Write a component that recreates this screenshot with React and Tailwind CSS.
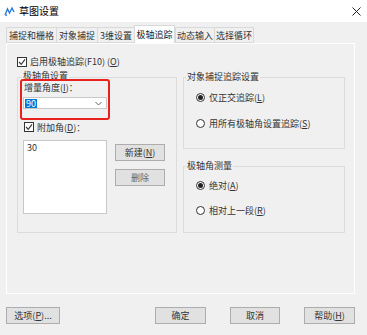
import React from "react";

const FONT = { fontFamily: '"Noto Sans CJK SC", "Noto Sans", sans-serif' };

function CheckBox() {
  return (
    <span className="w-[10px] h-[10px] border border-[#333] bg-white flex items-center justify-center shrink-0">
      <svg width="8" height="8" viewBox="0 0 8 8">
        <path d="M1 4 L3.2 6.3 L7 1.3" fill="none" stroke="#333" strokeWidth="1.1" />
      </svg>
    </span>
  );
}

function Radio({ checked }) {
  return (
    <span className="w-[9px] h-[9px] rounded-full border border-[#333] bg-white flex items-center justify-center shrink-0">
      {checked && <span className="w-[5px] h-[5px] rounded-full bg-[#222]" />}
    </span>
  );
}

function Btn({ children, className = "" }) {
  return (
    <div
      className={
        "h-[17px] bg-[#e1e1e1] border border-[#adadad] flex items-center justify-center text-[9px] text-[#333] " +
        className
      }
    >
      {children}
    </div>
  );
}

function U({ children }) {
  return <span className="underline">{children}</span>;
}

function GroupLabel({ children, className = "" }) {
  return (
    <span className={"self-start px-px bg-[#f0f0f0] text-[9px] leading-[10px] " + className}>
      {children}
    </span>
  );
}

export default function App() {
  const tabs = [
    { label: "捕捉和栅格", w: "w-[51px]" },
    { label: "对象捕捉", w: "w-[42px]" },
    { label: "3维设置", w: "w-[38px]" },
    { label: "极轴追踪", w: "w-[41px]", active: true },
    { label: "动态输入", w: "w-[40px]" },
    { label: "选择循环", w: "w-[40px]" },
  ];

  return (
    <div className="w-[367px] h-[335px] bg-[#f0f0f0] flex flex-col text-[#333] overflow-hidden" style={FONT}>
      {/* title bar */}
      <div className="h-[22px] bg-white flex items-center pl-[4px] pr-[6px]">
        <svg width="11" height="11" viewBox="0 0 11 11">
          <path d="M1 9 L3.5 3 L5.5 7 L8 2 L10 6" fill="none" stroke="#2b7bd6" strokeWidth="1.4" />
          <circle cx="2" cy="9" r="1.2" fill="#5aa2e8" />
        </svg>
        <span className="ml-[4px] text-[10px] text-black leading-none">草图设置</span>
        <svg className="ml-auto" width="9" height="9" viewBox="0 0 9 9">
          <path d="M0.5 0.5 L8.5 8.5 M8.5 0.5 L0.5 8.5" stroke="#222" strokeWidth="1" />
        </svg>
      </div>

      {/* tabs */}
      <div className="mt-[4px] ml-[6px] h-[17px] flex items-end">
        {tabs.map((t) => (
          <div
            key={t.label}
            className={
              t.w +
              " flex items-center justify-center text-[9px] leading-none " +
              (t.active
                ? "h-[18px] bg-white border border-b-0 border-[#d9d9d9] text-[#222]"
                : "h-[16px] bg-[#f0f0f0] border border-[#d9d9d9] -mr-px text-[#333]")
            }
          >
            {t.label}
          </div>
        ))}
      </div>

      {/* panel */}
      <div className="ml-[6px] w-[349px] h-[251px] border border-white bg-[#f0f0f0] pl-[10px] pt-[12px] flex flex-col">
        <div className="flex items-center h-[11px] gap-[3px] text-[9px] leading-none">
          <CheckBox />
          <span>
            启用极轴追踪(F10) (<U>O</U>)
          </span>
        </div>

        <div className="mt-[10px] flex gap-[6px]">
          {/* left group */}
          <div className="relative w-[160px] h-[156px] border border-[#dcdcdc] flex flex-col">
            <GroupLabel className="-mt-[7px] ml-[4px]">极轴角设置</GroupLabel>
            <div className="ml-[6px] mt-[2px] text-[9px] leading-[10px]">
              增量角度(<U>I</U>)：
            </div>
            <div className="ml-[5px] mt-[4px] w-[84px] h-[12px] bg-white border border-[#c8c8c8] flex items-center pl-[1px] pr-[4px]">
              <span className="bg-[#0078d7] text-white text-[9px] leading-[9px] px-px">90</span>
              <svg className="ml-auto" width="7" height="5" viewBox="0 0 7 5">
                <path d="M0.5 1 L3.5 4 L6.5 1" fill="none" stroke="#555" strokeWidth="0.9" />
              </svg>
            </div>
            <div className="ml-[6px] mt-[13px] flex items-center gap-[3px] h-[10px] text-[9px] leading-none">
              <CheckBox />
              <span>
                附加角(<U>D</U>)：
              </span>
            </div>
            <div className="mt-[8px] flex">
              <div className="ml-[5px] w-[84px] h-[74px] bg-white border border-[#c8c8c8] px-[3px] pt-[1px] text-[9px] leading-[11px]">
                30
              </div>
              <div className="ml-[8px] w-[50px] flex flex-col">
                <Btn className="mt-[4px]">
                  新建(<U>N</U>)
                </Btn>
                <Btn className="mt-[8px] text-[#666]">删除</Btn>
              </div>
            </div>

            {/* red annotation */}
            <div className="absolute left-[2px] top-[1px] w-[90px] h-[41px] border-2 border-[#e8211e] rounded-[3px]" />
          </div>

          {/* right column */}
          <div className="flex flex-col">
            <div className="w-[162px] h-[72px] border border-[#dcdcdc] flex flex-col">
              <GroupLabel className="-mt-[6px] ml-[2px]">对象捕捉追踪设置</GroupLabel>
              <div className="ml-[12px] mt-[10px] flex items-center gap-[4px] h-[10px] text-[9px] leading-none">
                <Radio checked />
                <span>
                  仅正交追踪(<U>L</U>)
                </span>
              </div>
              <div className="ml-[12px] mt-[16px] flex items-center gap-[4px] h-[10px] text-[9px] leading-none">
                <Radio />
                <span>
                  用所有极轴角设置追踪(<U>S</U>)
                </span>
              </div>
            </div>

            <div className="mt-[17px] w-[162px] h-[67px] border border-[#dcdcdc] flex flex-col">
              <GroupLabel className="-mt-[6px] ml-[2px]">极轴角测量</GroupLabel>
              <div className="ml-[12px] mt-[9px] flex items-center gap-[4px] h-[10px] text-[9px] leading-none">
                <Radio checked />
                <span>
                  绝对(<U>A</U>)
                </span>
              </div>
              <div className="ml-[12px] mt-[15px] flex items-center gap-[4px] h-[10px] text-[9px] leading-none">
                <Radio />
                <span>
                  相对上一段(<U>R</U>)
                </span>
              </div>
            </div>
          </div>
        </div>
      </div>

      {/* bottom buttons */}
      <div className="mt-[13px] flex">
        <Btn className="ml-[6px] w-[54px]">
          选项(<U>P</U>)...
        </Btn>
        <Btn className="ml-[95px] w-[51px] border-[#0078d7] border-[1.5px]">确定</Btn>
        <Btn className="ml-[24px] w-[50px]">取消</Btn>
        <Btn className="ml-[24px] w-[51px]">
          帮助(<U>H</U>)
        </Btn>
      </div>
    </div>
  );
}
